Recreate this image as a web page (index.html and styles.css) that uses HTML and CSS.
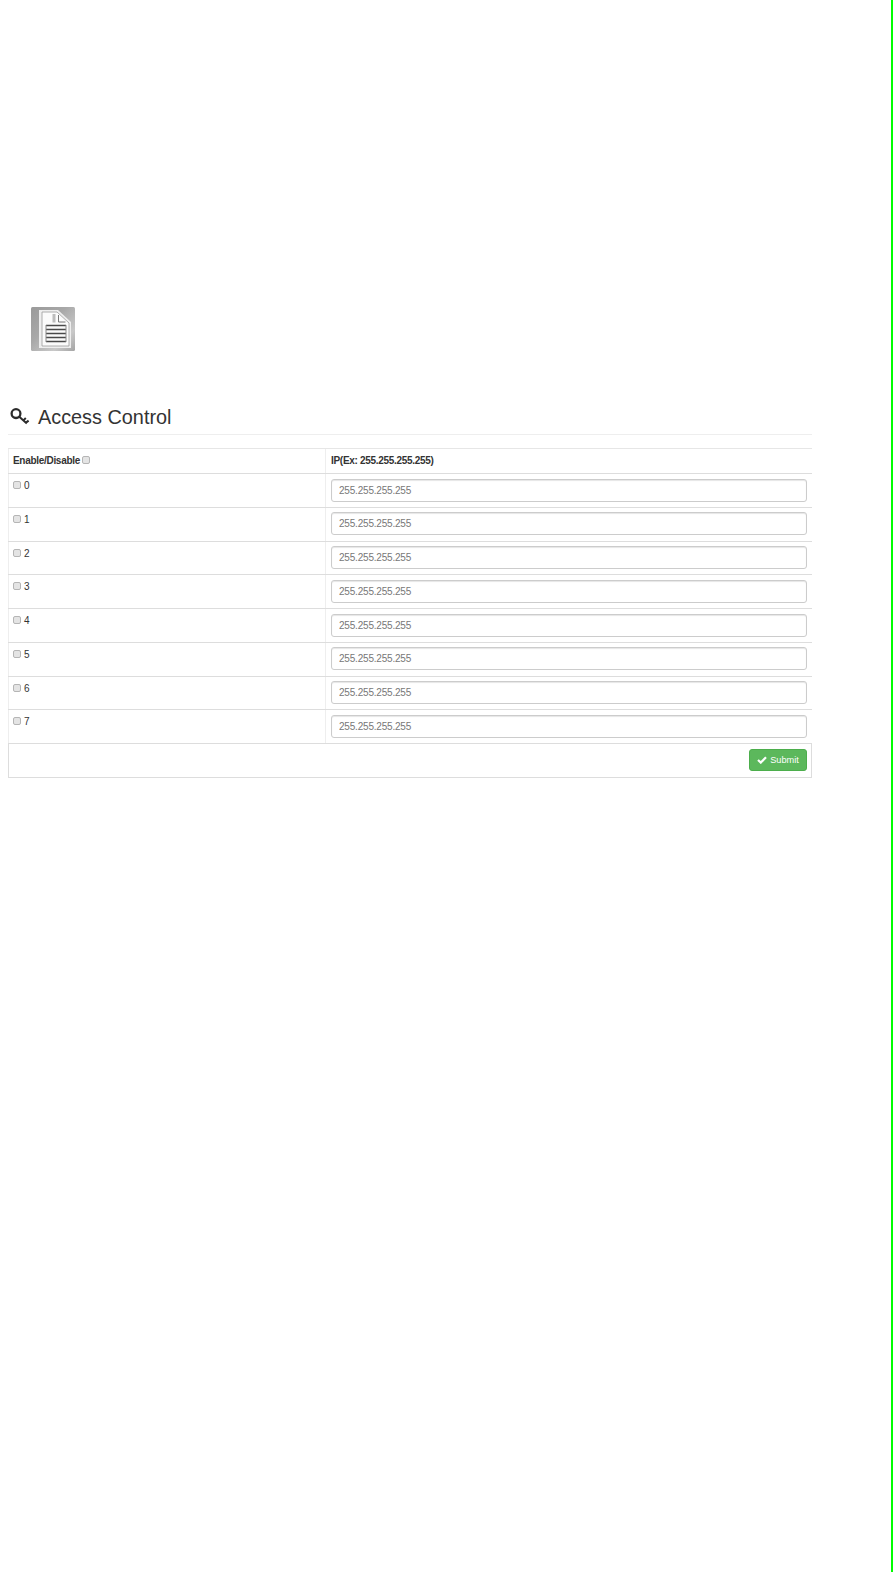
FILE: index.html
```html
<!DOCTYPE html>
<html lang="en">
<head>
<meta charset="utf-8">
<title>Access Control</title>
<link rel="stylesheet" href="styles.css">
</head>
<body>
<div class="page">
  <main class="content">
    <svg class="doc-icon" width="44" height="44" viewBox="0 0 44 44" aria-hidden="true">
      <defs>
        <linearGradient id="docbg" x1="0" y1="0" x2="1" y2="1">
          <stop offset="0" stop-color="#9a9a9a"/>
          <stop offset="0.4" stop-color="#a8a8a8"/>
          <stop offset="0.75" stop-color="#c9c9c9"/>
          <stop offset="1" stop-color="#a4a4a4"/>
        </linearGradient>
      </defs>
      <rect width="44" height="44" rx="1.5" fill="url(#docbg)"/>
      <path d="M8 3H27L40 15V41H8Z" fill="#eeeeee"/>
      <path d="M11 5H26L38 16V39H11Z" fill="#fbfbfb" stroke="#9c9c9c" stroke-width="0.8"/>
      <path d="M23 7V15.5" stroke="#bdbdbd" stroke-width="3" fill="none"/>
      <path d="M27.5 8V15H34.5" fill="none" stroke="#777" stroke-width="1"/>
      <path d="M15 18.5H35M15 22.5H35M15 26.5H35M15 30.5H35M15 34.5H35" stroke="#4a4a4a" stroke-width="1.3" fill="none"/>
      <path d="M15 18V35M35 18V35" stroke="#8a8a8a" stroke-width="1" fill="none"/>
    </svg>
    <h1 class="title">
      <svg class="key-icon" width="20" height="20" viewBox="0 0 20 20" aria-hidden="true">
        <circle cx="6" cy="6.6" r="4.4" fill="none" stroke="#2b2b2b" stroke-width="2.3"/>
        <path d="M9 9.6L16.8 16.6M13.4 13.4L15.8 11M16 15.6L18.6 13.6" fill="none" stroke="#2b2b2b" stroke-width="2"/>
      </svg>
      <span>Access Control</span>
    </h1>
    <div class="table">
      <div class="row head">
        <div class="cell c1">Enable/Disable <span class="check"></span></div>
        <div class="cell c2">IP(Ex: 255.255.255.255)</div>
      </div>
      <div class="row">
        <div class="cell c1"><span class="check"></span>0</div>
        <div class="cell c2"><input class="ip" type="text" placeholder="255.255.255.255"></div>
      </div>
      <div class="row">
        <div class="cell c1"><span class="check"></span>1</div>
        <div class="cell c2"><input class="ip" type="text" placeholder="255.255.255.255"></div>
      </div>
      <div class="row">
        <div class="cell c1"><span class="check"></span>2</div>
        <div class="cell c2"><input class="ip" type="text" placeholder="255.255.255.255"></div>
      </div>
      <div class="row">
        <div class="cell c1"><span class="check"></span>3</div>
        <div class="cell c2"><input class="ip" type="text" placeholder="255.255.255.255"></div>
      </div>
      <div class="row">
        <div class="cell c1"><span class="check"></span>4</div>
        <div class="cell c2"><input class="ip" type="text" placeholder="255.255.255.255"></div>
      </div>
      <div class="row">
        <div class="cell c1"><span class="check"></span>5</div>
        <div class="cell c2"><input class="ip" type="text" placeholder="255.255.255.255"></div>
      </div>
      <div class="row">
        <div class="cell c1"><span class="check"></span>6</div>
        <div class="cell c2"><input class="ip" type="text" placeholder="255.255.255.255"></div>
      </div>
      <div class="row">
        <div class="cell c1"><span class="check"></span>7</div>
        <div class="cell c2"><input class="ip" type="text" placeholder="255.255.255.255"></div>
      </div>
      <div class="foot">
        <button class="submit" type="button">
          <svg width="10" height="8" viewBox="0 0 10 8" aria-hidden="true"><path d="M1 4L3.8 6.6L9 1.2" fill="none" stroke="#fff" stroke-width="2.2"/></svg>
          Submit
        </button>
      </div>
    </div>
  </main>
</div>
</body>
</html>
```
FILE: styles.css
```css
html, body {
  margin: 0;
  padding: 0;
  background: #fff;
}
body {
  font-family: "Liberation Sans", Arial, sans-serif;
  font-size: 10px;
  color: #333;
}
.page {
  box-sizing: border-box;
  width: 893px;
  height: 1572px;
  border-right: 2px solid #00ff00;
  overflow: hidden;
}
.content {
  width: 804px;
  margin-left: 8px;
  padding-top: 307px;
}
.doc-icon {
  display: block;
  margin-left: 23px;
}
.title {
  display: flex;
  align-items: center;
  height: 26px;
  margin: 51px 0 13px;
  padding: 2px 0 4px 2px;
  border-bottom: 1px solid #eee;
  font-size: 19.85px;
  font-weight: 400;
  line-height: 26px;
  color: #333;
}
.key-icon {
  margin-right: 8px;
}
.table {
  border-top: 1px solid #e6e6e6;
}
.row {
  display: flex;
  box-sizing: border-box;
  height: 33.75px;
  border-bottom: 1px solid #ddd;
}
.head {
  height: 25px;
  border-bottom-width: 1.5px;
  font-weight: 700;
  letter-spacing: -0.3px;
}
.cell {
  box-sizing: border-box;
}
.c1 {
  width: 317px;
  padding: 6px 0 0 4px;
  border-left: 1px solid #eee;
  line-height: 12px;
}
.c2 {
  flex: 1;
  padding: 4.5px 4px 0 5px;
  border-left: 1px solid #eee;
  line-height: 12px;
}
.head .c1,
.head .c2 {
  padding-top: 6px;
}
.check {
  display: inline-block;
  box-sizing: border-box;
  width: 8px;
  height: 8px;
  margin-right: 3px;
  border: 1px solid #b5b5b5;
  border-radius: 2px;
  background: #e4e4e4;
  vertical-align: 0;
}
.ip {
  display: block;
  box-sizing: border-box;
  width: 476px;
  height: 23px;
  padding: 0 7px;
  border: 1px solid #ccc;
  border-radius: 3px;
  box-shadow: inset 0 1px 1px rgba(0, 0, 0, 0.1);
  font: 10px "Liberation Sans", Arial, sans-serif;
  letter-spacing: -0.2px;
  background: #fff;
}
.ip::placeholder {
  color: #777;
  opacity: 1;
}
.foot {
  display: flex;
  justify-content: flex-end;
  box-sizing: border-box;
  height: 34px;
  padding: 5px 4px 0 0;
  border: 1px solid #ddd;
  border-top: 0;
}
.submit {
  display: flex;
  align-items: center;
  justify-content: center;
  gap: 3px;
  box-sizing: border-box;
  width: 58px;
  height: 22px;
  padding: 0;
  border: 1px solid #4cae4c;
  border-radius: 3px;
  background: #5cb85c;
  color: #fff;
  font: 9.2px "Liberation Sans", Arial, sans-serif;
}
```
